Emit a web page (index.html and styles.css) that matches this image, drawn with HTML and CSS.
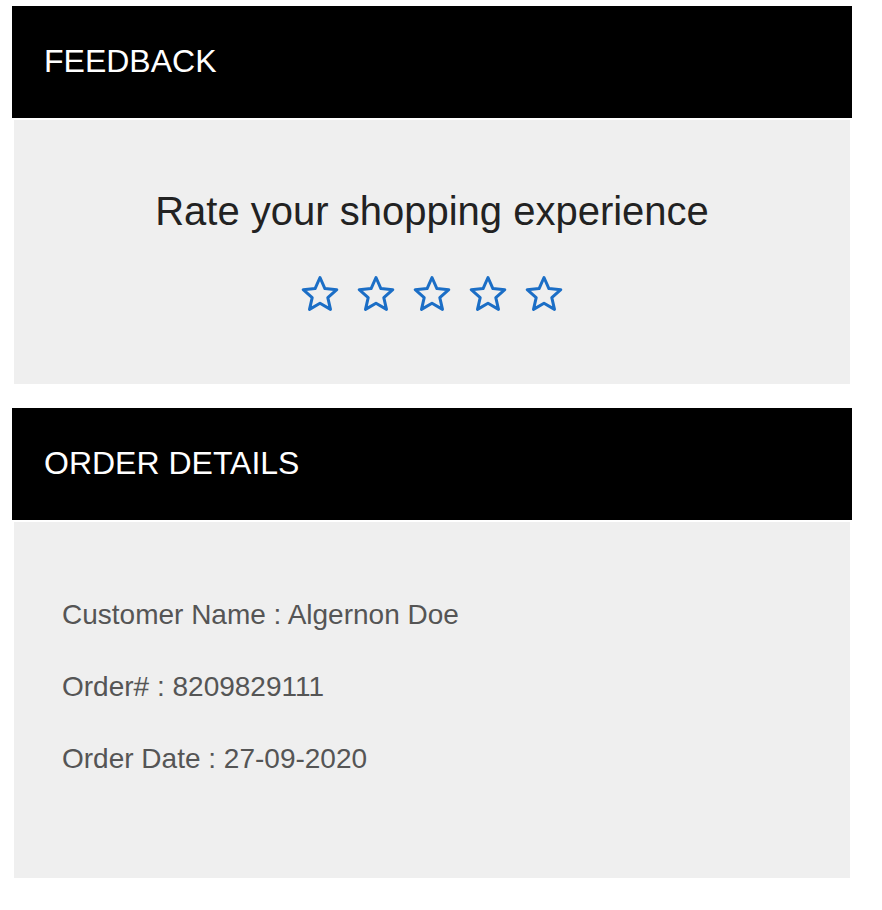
FILE: index.html
```html
<!DOCTYPE html>
<html lang="en">
<head>
  <meta charset="UTF-8" />
  <title>Feedback</title>
  <link rel="stylesheet" href="styles.css">
</head>
<body>
  <div class="page">

    <!-- feedback -->
    <div class="card">
      <div class="card-header">FEEDBACK</div>
      <div class="card-body feedback-body">
        <h2 class="rate-title">Rate your shopping experience</h2>
        <div class="stars">
          <svg class="star" viewBox="0 0 40 40"><path d="M20 3.5 L24.9 14.6 L36.8 15.7 L27.8 23.6 L30.5 35.4 L20 29.2 L9.5 35.4 L12.2 23.6 L3.2 15.7 L15.1 14.6 Z" /></svg>
          <svg class="star" viewBox="0 0 40 40"><path d="M20 3.5 L24.9 14.6 L36.8 15.7 L27.8 23.6 L30.5 35.4 L20 29.2 L9.5 35.4 L12.2 23.6 L3.2 15.7 L15.1 14.6 Z" /></svg>
          <svg class="star" viewBox="0 0 40 40"><path d="M20 3.5 L24.9 14.6 L36.8 15.7 L27.8 23.6 L30.5 35.4 L20 29.2 L9.5 35.4 L12.2 23.6 L3.2 15.7 L15.1 14.6 Z" /></svg>
          <svg class="star" viewBox="0 0 40 40"><path d="M20 3.5 L24.9 14.6 L36.8 15.7 L27.8 23.6 L30.5 35.4 L20 29.2 L9.5 35.4 L12.2 23.6 L3.2 15.7 L15.1 14.6 Z" /></svg>
          <svg class="star" viewBox="0 0 40 40"><path d="M20 3.5 L24.9 14.6 L36.8 15.7 L27.8 23.6 L30.5 35.4 L20 29.2 L9.5 35.4 L12.2 23.6 L3.2 15.7 L15.1 14.6 Z" /></svg>
        </div>
      </div>
    </div>

    <!-- order details -->
    <div class="card">
      <div class="card-header">ORDER DETAILS</div>
      <div class="card-body order-body">
        <p class="order-line">Customer Name : Algernon Doe</p>
        <p class="order-line">Order# : 8209829111</p>
        <p class="order-line">Order Date : 27-09-2020</p>
      </div>
    </div>

  </div>
</body>
</html>
```

FILE: styles.css
```css
body {
  margin: 0;
  font-family: "Liberation Sans", Arial, sans-serif;
  background: #fff;
}

.page {
  display: flex;
  flex-direction: column;
  gap: 24px;
  padding: 6px 12px;
}

.card {
  width: 840px;
}

.card-header {
  height: 112px;
  box-sizing: border-box;
  display: flex;
  align-items: center;
  padding: 0 0 2px 32px;
  background: #000;
  color: #fff;
  font-size: 32px;
}

.card-body {
  margin: 2px 2px 0;
  background: #efefef;
}

.feedback-body {
  height: 264px;
  display: flex;
  flex-direction: column;
  align-items: center;
  box-sizing: border-box;
  padding-top: 68px;
}

.rate-title {
  margin: 0;
  font-size: 40px;
  font-weight: normal;
  color: #222;
  line-height: 46px;
}

.stars {
  display: flex;
  gap: 16px;
  margin-top: 40px;
}

.star {
  width: 40px;
  height: 40px;
}

.star path {
  fill: none;
  stroke: #1b6ec6;
  stroke-width: 3;
  stroke-linejoin: round;
}

.order-body {
  height: 356px;
  box-sizing: border-box;
  padding: 77px 48px 0;
}

.order-line {
  margin: 0 0 40px;
  font-size: 28px;
  line-height: 32px;
  color: #555;
}
```
